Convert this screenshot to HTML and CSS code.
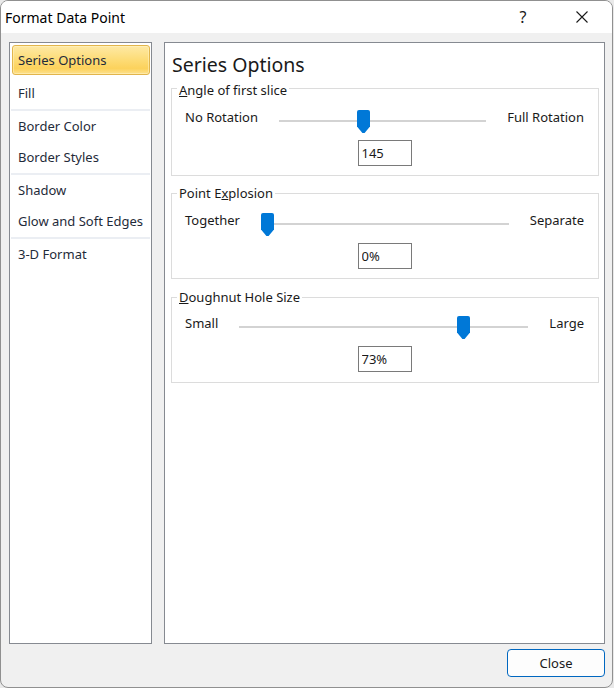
FILE: index.html
```html
<!DOCTYPE html>
<html>
<head>
<meta charset="utf-8">
<title>Format Data Point</title>
<link rel="stylesheet" href="styles.css">
</head>
<body>
<div class="window">
  <header class="titlebar">
    <span class="title">Format Data Point</span>
    <span class="help">?</span>
    <span class="close-x"><svg width="12" height="12" viewBox="0 0 12 12"><path d="M0.5 0.5L11.5 11.5M11.5 0.5L0.5 11.5" stroke="#1a1a1a" stroke-width="1.1" fill="none"/></svg></span>
  </header>
  <main class="content">
    <nav class="nav">
      <div class="item selected">Series Options</div>
      <div class="item">Fill</div>
      <div class="sep"></div>
      <div class="item">Border Color</div>
      <div class="item">Border Styles</div>
      <div class="sep"></div>
      <div class="item">Shadow</div>
      <div class="item">Glow and Soft Edges</div>
      <div class="sep"></div>
      <div class="item">3-D Format</div>
    </nav>
    <section class="panel">
      <h1 class="heading">Series Options</h1>
      <fieldset class="group g1">
        <legend><u>A</u>ngle of first slice</legend>
        <div class="slider-row">
          <span class="lbl">No Rotation</span>
          <div class="track"><svg class="thumb" style="left: calc(0.4028 * (100% - 13px))" width="13" height="23" viewBox="0 0 13 23"><path d="M2 0H11Q13 0 13 2V16.5L7.6 23H5.4L0 16.5V2Q0 0 2 0Z" fill="#0078d7"/></svg></div>
          <span class="lbl">Full Rotation</span>
        </div>
        <input class="num" type="text" value="145" readonly>
      </fieldset>
      <fieldset class="group g2">
        <legend>Point E<u>x</u>plosion</legend>
        <div class="slider-row">
          <span class="lbl">Together</span>
          <div class="track"><svg class="thumb" style="left: calc(0 * (100% - 13px))" width="13" height="23" viewBox="0 0 13 23"><path d="M2 0H11Q13 0 13 2V16.5L7.6 23H5.4L0 16.5V2Q0 0 2 0Z" fill="#0078d7"/></svg></div>
          <span class="lbl">Separate</span>
        </div>
        <input class="num" type="text" value="0%" readonly>
      </fieldset>
      <fieldset class="group g3">
        <legend><u>D</u>oughnut Hole Size</legend>
        <div class="slider-row">
          <span class="lbl">Small</span>
          <div class="track"><svg class="thumb" style="left: calc(0.7875 * (100% - 13px))" width="13" height="23" viewBox="0 0 13 23"><path d="M2 0H11Q13 0 13 2V16.5L7.6 23H5.4L0 16.5V2Q0 0 2 0Z" fill="#0078d7"/></svg></div>
          <span class="lbl">Large</span>
        </div>
        <input class="num" type="text" value="73%" readonly>
      </fieldset>
    </section>
  </main>
  <footer class="footer">
    <button class="btn" type="button">Close</button>
  </footer>
</div>
</body>
</html>
```

FILE: styles.css
```css
* { box-sizing: border-box; }

html, body {
  margin: 0;
  padding: 0;
  background: #e9e9e9;
  font-family: "Noto Sans", "Open Sans", sans-serif;
  font-size: 13px;
  color: #1a1a1a;
}

.window {
  width: 613px;
  height: 688px;
  border: 1px solid #909090;
  border-radius: 8px;
  overflow: hidden;
  background: #f0f0f0;
  display: flex;
  flex-direction: column;
}

.titlebar {
  height: 32px;
  background: #ffffff;
  display: flex;
  align-items: center;
  flex: none;
}

.title {
  flex: 1;
  padding-left: 4px;
  font-size: 14px;
  color: #000;
}

.help {
  width: 46px;
  margin-right: 6px;
  text-align: center;
  font-size: 16px;
  color: #1a1a1a;
}

.close-x {
  width: 60px;
  display: flex;
  justify-content: center;
  align-items: center;
}

.close-x svg { display: block; }

.content {
  flex: none;
  display: grid;
  grid-template-columns: 143px 441px;
  column-gap: 12px;
  padding: 9px 0 0 8px;
  height: 611px;
}

.nav {
  height: 602px;
  background: #ffffff;
  border: 1px solid #868a91;
  padding: 2px 1px 0 2px;
}

.item {
  height: 31px;
  line-height: 29px;
  border: 1px solid transparent;
  border-radius: 3px;
  padding-left: 5px;
  color: #1f2b3a;
  white-space: nowrap;
}

.item.selected {
  height: 30px;
  line-height: 28px;
  margin-bottom: 3px;
  border-color: #e2b54c;
  background: linear-gradient(#fee9a5 0%, #fddd7a 45%, #fcd25c 80%, #fde08e 100%);
  box-shadow: inset 0 0 0 1px rgba(255, 245, 200, 0.5);
}

.sep {
  height: 2px;
  margin-left: -1px;
  background: #ebeef3;
}

.panel {
  height: 602px;
  background: #ffffff;
  border: 1px solid #868a91;
  padding: 0 5px 0 6px;
}

.heading {
  margin: 10px 0 0 1px;
  font-size: 19.5px;
  line-height: 24px;
  font-weight: normal;
  color: #1a1a1a;
}

.group {
  margin: 7px 0 0 0;
  padding: 9px 14px 9px 13px;
  border: 1px solid #dcdcdc;
  min-width: 0;
  display: flex;
  flex-direction: column;
  align-items: center;
}

.group.g1 {
  margin-top: 1px;
  padding-top: 11px;
}

.group.g3 {
  margin-top: 8px;
  padding-top: 8px;
  padding-bottom: 10px;
}

.group legend {
  margin-left: -8px;
  padding: 4px 2px 0 2px;
  line-height: 16px;
  color: #1a1a1a;
}

.group.g2 legend,
.group.g3 legend {
  padding-top: 2px;
  padding-bottom: 2px;
}

.slider-row {
  align-self: stretch;
  height: 24px;
  display: flex;
  align-items: flex-start;
  gap: 21px;
}

.lbl {
  line-height: 16px;
  white-space: nowrap;
  color: #1a1a1a;
}

.track {
  flex: 1;
  height: 24px;
  position: relative;
}

.track::before {
  content: "";
  display: block;
  margin-top: 11px;
  height: 2px;
  background: #d3d3d3;
}

.thumb {
  position: absolute;
  top: 1px;
  display: block;
}

.num {
  margin-top: 7px;
  width: 54px;
  height: 26px;
  border: 1px solid #7a7a7a;
  padding: 0 3px;
  font-family: "Noto Sans", "Open Sans", sans-serif;
  font-size: 13px;
  color: #1a1a1a;
  background: #fff;
  outline: none;
}

.footer {
  flex: none;
  display: flex;
  justify-content: flex-end;
  padding: 5px 7px 0 0;
}

.btn {
  width: 98px;
  height: 28px;
  border: 1px solid #0067c0;
  border-radius: 4px;
  background: #fdfdfd;
  font-family: "Noto Sans", "Open Sans", sans-serif;
  font-size: 13px;
  color: #1a1a1a;
  padding: 0;
}
```
